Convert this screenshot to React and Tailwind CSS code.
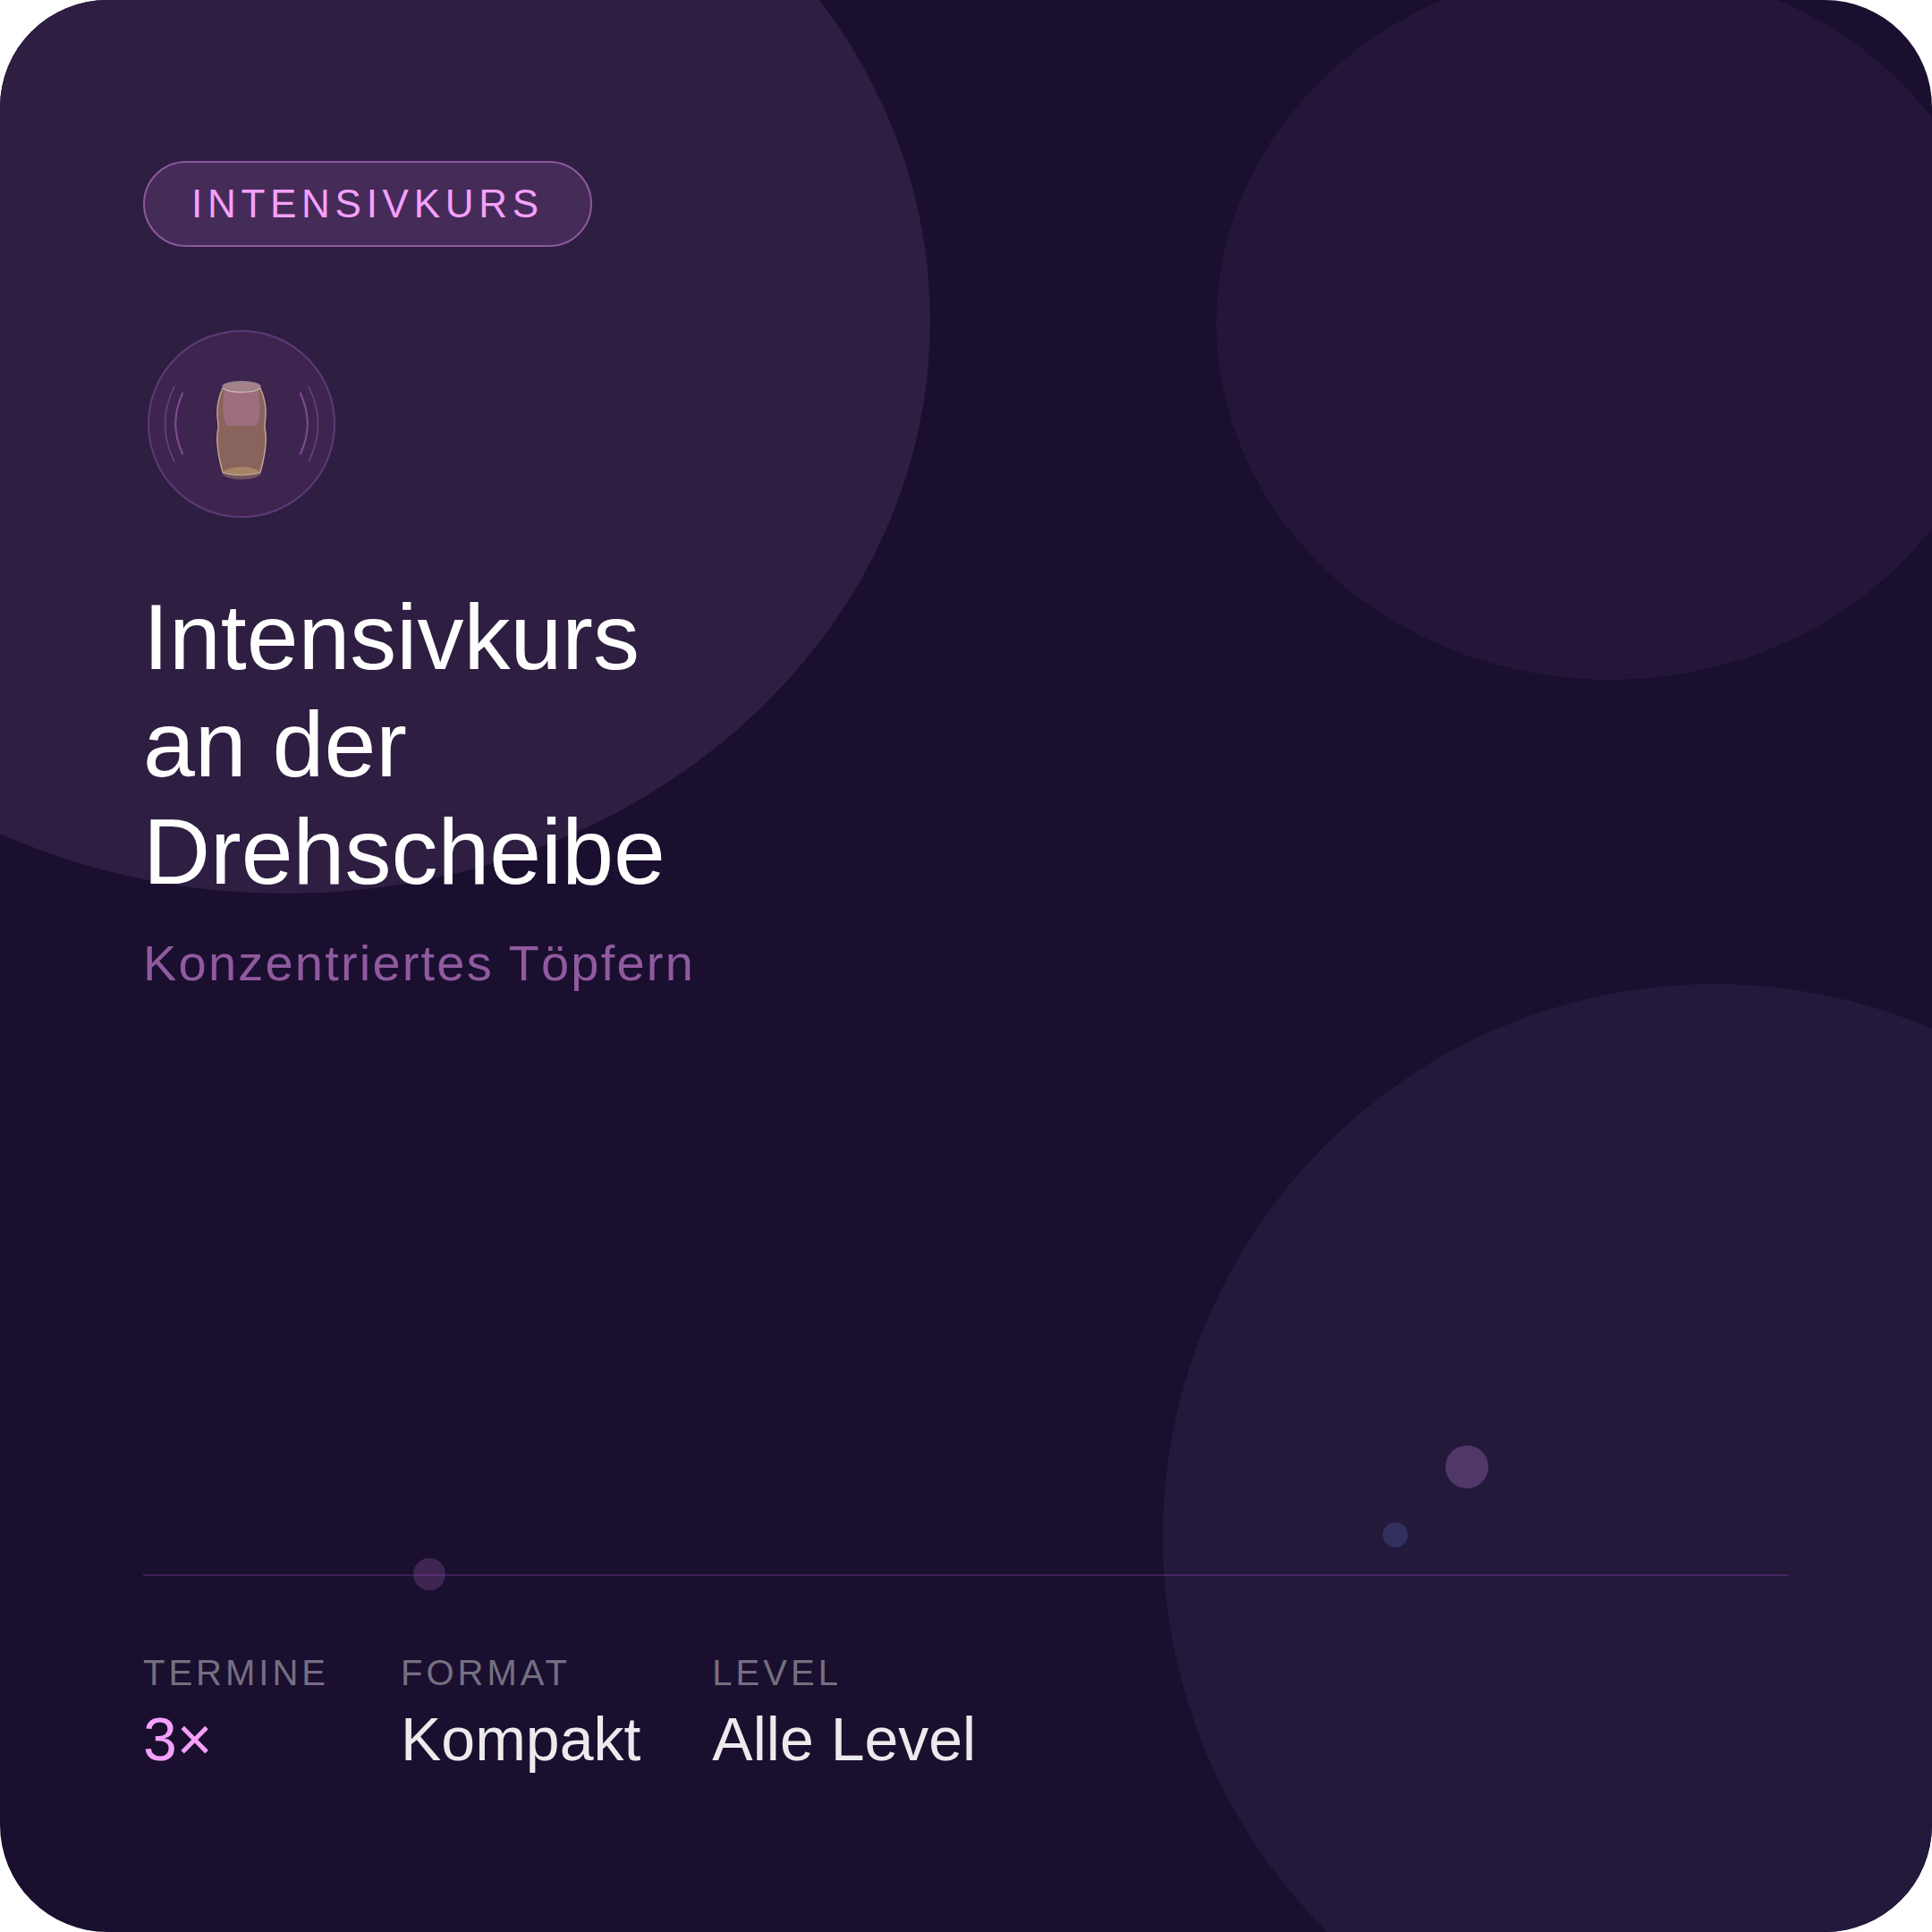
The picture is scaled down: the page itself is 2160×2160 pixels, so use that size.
const STATS = [
  { label: 'TERMINE', value: '3×', accent: true },
  { label: 'FORMAT', value: 'Kompakt' },
  { label: 'LEVEL', value: 'Alle Level' },
];

const Backdrop = () => (
  <svg viewBox="0 0 2160 2160" className="absolute inset-0 w-full h-full">
    <ellipse cx="320" cy="359" rx="720" ry="640" fill="#2e1f42" />
    <ellipse cx="1800" cy="361" rx="440" ry="399" fill="#241638" />
    <ellipse cx="1917" cy="1719" rx="617" ry="619" fill="#231a3b" />
    <circle cx="1640" cy="1640" r="24" fill="#51366a" />
    <circle cx="1560" cy="1716" r="14" fill="#33305f" />
    <circle cx="480" cy="1760" r="18" fill="#3e2552" />
  </svg>
);

const WheelIcon = () => (
  <svg viewBox="0 0 210 210" className="w-[210px] h-[210px]" fill="none">
    <circle cx="105" cy="105" r="104" fill="#3d2550" stroke="#5d3b76" strokeWidth="2" />
    {/* spin lines */}
    <path d="M30 63 Q9 105 30 147" stroke="#6a4280" strokeWidth="1.5" />
    <path d="M39.5 70 Q23 105 39.5 139" stroke="#7f4e93" strokeWidth="2" />
    <path d="M180 63 Q201 105 180 147" stroke="#6a4280" strokeWidth="1.5" />
    <path d="M170.5 70 Q187 105 170.5 139" stroke="#7f4e93" strokeWidth="2" />
    {/* vase */}
    <ellipse cx="105" cy="160" rx="21.5" ry="7" fill="#72545e" />
    <path d="M84 65 C79.5 75 77.5 85 78 95 C78.5 103 79.5 106 79 110 C77.5 116 77.5 124 78.5 132 C79.5 142 82 152 84 159 C96 163 114 163 126 159 C128 152 130.5 142 131.5 132 C132.5 124 132.5 116 131 110 C130.5 106 131.5 103 132 95 C132.5 85 130.5 75 126 65 Z" fill="#88645c" stroke="#bda394" strokeWidth="1.5" />
    <path d="M86 67 C84 77 83 95 88 107 L122 107 C127 95 126 77 124 67 Z" fill="#9c6e80" />
    <path d="M84 158.5 C93 151 117 151 126 158.5 C114 162 96 162 84 158.5 Z" fill="#a88466" />
    <ellipse cx="105" cy="63" rx="21" ry="5.5" fill="#a58287" stroke="#8f7f96" strokeWidth="1.5" />
    <path d="M84 65 C93 71 117 71 126 65" stroke="#cdb3a0" strokeWidth="1.5" />
  </svg>
);

const App = () => {
  return (
    <div className="relative w-[2160px] h-[2160px] rounded-[120px] overflow-hidden bg-[#1a0f2e] font-['Liberation_Sans',sans-serif]">
      <Backdrop />

      <div className="relative h-full flex flex-col px-[160px] pt-[180px] pb-[176px]">
        {/* Badge */}
        <div className="self-start h-[96px] w-[502px] flex items-center pl-[52px] rounded-full border-2 border-[#8b5a9e] bg-[#452b58] text-[#f5a0ff] text-[44px] tracking-[5.72px]">
          INTENSIVKURS
        </div>

        <div className="mt-[93px] ml-[5px]">
          <WheelIcon />
        </div>

        <h1 className="mt-[73px] text-white text-[104px] leading-[120px] font-normal">
          Intensivkurs<br />an der<br />Drehscheibe
        </h1>
        <p className="mt-[23px] text-[#8f5a9e] text-[56px] tracking-[2.2px]">Konzentriertes Töpfern</p>

        {/* Stats */}
        <div className="mt-auto">
          <div className="h-[2px] bg-[#a050d0]/25" />
          <div className="mt-[85px] flex gap-[80px]">
            {STATS.map(({ label, value, accent }) => (
              <div key={label}>
                <div className="text-[#766f82] text-[40px] tracking-[4px] leading-[46px]">{label}</div>
                <div className={`mt-[11px] text-[68px] leading-[80px] ${accent ? 'text-[#f5a0ff]' : 'text-[#ebeaec]'}`}>
                  {value}
                </div>
              </div>
            ))}
          </div>
        </div>
      </div>
    </div>
  );
};

export default App;
